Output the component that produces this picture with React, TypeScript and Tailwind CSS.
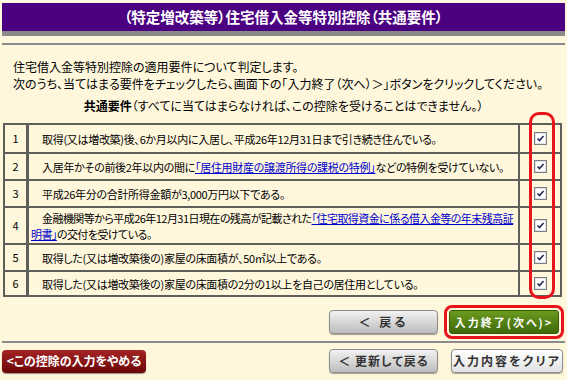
import React from "react";

const font = "font-['Noto_Sans_CJK_JP','Noto_Sans',sans-serif] [font-feature-settings:'palt']";

function Check() {
  return (
    <svg width="13" height="13" viewBox="0 0 13 13" className="block">
      <rect x="0.5" y="0.5" width="12" height="12" fill="#ffffff" stroke="#7b7f85" />
      <rect x="1.5" y="1.5" width="10" height="10" fill="none" stroke="#dfe3e8" />
      <path d="M3.5 6.5 L5.5 8.5 L9.5 4" fill="none" stroke="#1e2a55" strokeWidth="1.6" />
    </svg>
  );
}

const linkCls = "text-[#0000cc] underline";

const rows: { n: string; h: string; t: string; content: React.ReactNode }[] = [
  { n: "1", h: "h-[27px]", t: "tracking-[-0.3px]", content: <>取得(又は増改築)後、6か月以内に入居し、平成26年12月31日まで引き続き住んでいる。</> },
  {
    n: "2",
    h: "h-[27px]",
    t: "tracking-[-0.3px]",
    content: (
      <>
        入居年かその前後2年以内の間に<span className={linkCls}>「居住用財産の譲渡所得の課税の特例」</span>などの特例を受けていない。
      </>
    ),
  },
  { n: "3", h: "h-[27px]", t: "tracking-[-0.3px]", content: <>平成26年分の合計所得金額が3,000万円以下である。</> },
  {
    n: "4",
    h: "h-[37px]",
    t: "tracking-[-0.55px]",
    content: (
      <>
        金融機関等から平成26年12月31日現在の残高が記載された<span className={linkCls}>「住宅取得資金に係る借入金等の年末残高証<br />明書」</span>の交付を受けている。
      </>
    ),
  },
  { n: "5", h: "h-[27px]", t: "tracking-[-0.3px]", content: <>取得した(又は増改築後の)家屋の床面積が、50㎡以上である。</> },
  { n: "6", h: "h-[25px]", t: "tracking-[-0.3px]", content: <>取得した(又は増改築後の)家屋の床面積の2分の1以上を自己の居住用としている。</> },
];

export default function App() {
  return (
    <div className={`w-[567px] h-[380px] bg-[#fff7dc] pt-[3px] relative overflow-hidden ${font}`}>
      {/* Header */}
      <div className="mx-[2px]">
        <div className="h-[28px] bg-[#4b0082] flex items-center justify-center text-white font-bold text-[14.5px]">
          （特定増改築等）住宅借入金等特別控除（共通要件）
        </div>
        <div className="h-[5px] bg-[#8a8a8a]" />
        <div className="mt-[7px] h-[2px] bg-[#8a8a8a]" />
      </div>

      {/* Intro text */}
      <div className="mt-[13px] pl-[13px] text-[12px] leading-[17px] text-black">
        <div>住宅借入金等特別控除の適用要件について判定します。</div>
        <div>次のうち、当てはまる要件をチェックしたら、画面下の「入力終了（次へ）＞」ボタンをクリックしてください。</div>
      </div>
      <div className="mt-[5px] text-center text-[12px] leading-[17px] text-black">
        <span className="font-bold">共通要件</span>（すべてに当てはまらなければ、この控除を受けることはできません。）
      </div>

      {/* Table */}
      <div className="mt-[9px] ml-[3px] w-[559px] border-2 border-[#5e5e5a] text-[11px] text-black">
        {rows.map((r, i) => (
          <div key={r.n} className={`flex ${r.h} ${i > 0 ? "border-t-2 border-[#5e5e5a]" : ""}`}>
            <div className="w-[24px] shrink-0 flex items-center justify-center text-[11px] border-r-[3px] border-[#5e5e5a]">
              {r.n}
            </div>
            <div className="flex-1 min-w-0 flex items-center pl-[2px] pr-[2px] leading-[16px] border-r-2 border-[#5e5e5a]">
              <div className={`indent-[11px] whitespace-nowrap ${r.t}`}>{r.content}</div>
            </div>
            <div className="w-[40px] shrink-0 flex items-center justify-center">
              <Check />
            </div>
          </div>
        ))}
      </div>

      {/* Red oval highlight over checkboxes */}
      <div className="absolute left-[529px] top-[112px] w-[26px] h-[187px] border-[3px] border-[#e8141c] rounded-[10px]" />

      {/* Buttons row 1 */}
      <div className="mt-[8px] flex justify-end items-center pr-[3px]">
        <div className="w-[109px] h-[24px] rounded-[4px] border border-[#8c8c8c] bg-gradient-to-b from-[#f2f2f2] to-[#bdbdbd] flex items-center justify-center text-[12px] font-bold text-[#333] tracking-[3px] shadow-[0_1px_1px_rgba(0,0,0,0.35)]">
          ＜ 戻る
        </div>
        <div className="ml-[6px] p-[2px] border-[3px] border-[#e8141c] rounded-[8px]">
          <div className="w-[110px] h-[24px] rounded-[3px] border border-[#3a5a08] bg-gradient-to-b from-[#6c9a1e] to-[#3f6a0a] flex items-center justify-center text-[11px] font-bold text-white tracking-[2px]">
            入力終了(次へ)&gt;
          </div>
        </div>
      </div>

      <div className="mt-[2px] mx-[2px] h-[2px] bg-[#8a8a8a]" />

      {/* Buttons row 2 */}
      <div className="mt-[6px] flex items-center pl-[2px] pr-[4px]">
        <div className="w-[144px] h-[23px] rounded-[4px] bg-gradient-to-b from-[#a52424] to-[#6a0606] flex items-center justify-center text-[12px] font-bold text-white shadow-[0_1px_1px_rgba(0,0,0,0.4)]">
          &lt;この控除の入力をやめる
        </div>
        <div className="flex-1" />
        <div className="w-[109px] h-[24px] rounded-[4px] border border-[#8c8c8c] bg-gradient-to-b from-[#f2f2f2] to-[#bdbdbd] flex items-center justify-center text-[12px] font-bold text-[#333] tracking-[1px] shadow-[0_1px_1px_rgba(0,0,0,0.35)]">
          ＜ 更新して戻る
        </div>
        <div className="ml-[13px] w-[112px] h-[24px] rounded-[4px] border border-[#8c8c8c] bg-gradient-to-b from-[#ffffff] to-[#e2e2e2] flex items-center justify-center text-[12px] font-bold text-[#333] tracking-[2px] shadow-[0_1px_1px_rgba(0,0,0,0.35)]">
          入力内容をクリア
        </div>
      </div>
    </div>
  );
}
